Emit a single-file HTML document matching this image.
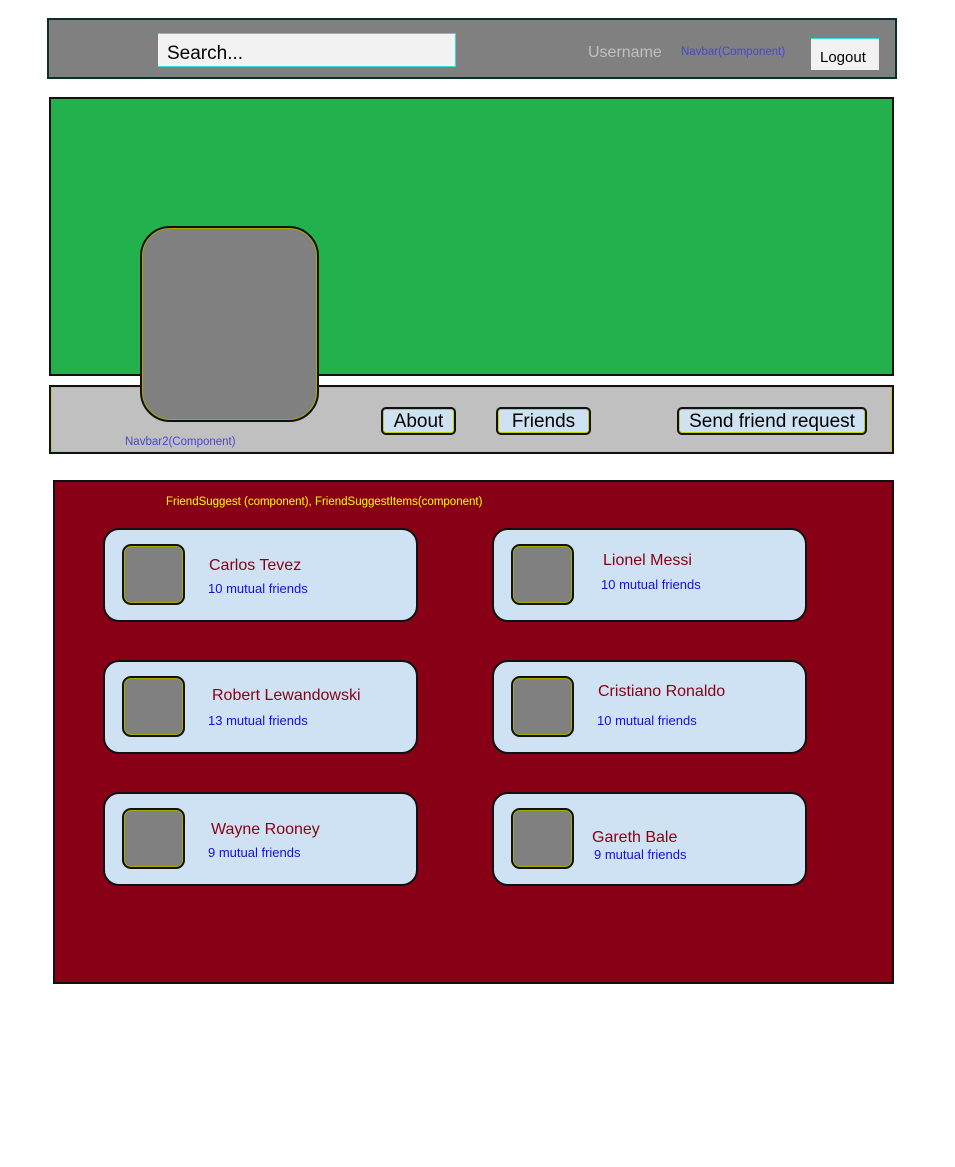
<!DOCTYPE html>
<html><head><style>
body{margin:0;width:955px;height:1167px;background:#fff;position:relative;font-family:"Liberation Sans",sans-serif;overflow:hidden}
div,span{position:absolute;box-sizing:border-box}
.btn{background:#cfe2f3;border:2px solid #111;box-shadow:0 0 0 1px #cc0 inset;border-radius:5px;font-size:19px;color:#000;line-height:26px;text-align:center}
.card{width:315px;height:94px;background:#cfe2f3;border:2px solid #111;border-radius:16px}
.th{width:63px;height:61px;background:#808080;border:2px solid #111;box-shadow:0 0 0 1px #aa0 inset;border-radius:9px}
.nm{color:#880015;font-size:16px}
.mf{color:#1010e0;font-size:13px}
</style></head><body>
<div style="left:47px;top:18px;width:850px;height:61px;background:#808080;border:2px solid #0c2f2c"></div>
<div style="left:158px;top:33px;width:298px;height:34px;background:#f2f2f2;border-right:1px solid #3dd;border-bottom:1px solid #3dd;border-top:1px solid #3dd;font-size:19px;padding:9px 0 0 9px;line-height:22px">Search...</div>
<span style="left:588px;top:44px;color:#c0c0c0;font-size:16px">Username</span>
<span style="left:681px;top:46px;color:#4848c8;font-size:11.5px">Navbar(Component)</span>
<div style="left:811px;top:38px;width:68px;height:32px;background:#f2f2f2;border-top:1px solid #3dd;font-size:15px;padding:10px 0 0 9px">Logout</div>

<div style="left:49px;top:97px;width:845px;height:279px;background:#22b14c;border:2px solid #111"></div>
<div style="left:49px;top:385px;width:845px;height:69px;background:#c0c0c0;border:2px solid #111;box-shadow:0 0 0 1px #cc0 inset"></div>
<div style="left:140px;top:226px;width:179px;height:196px;background:#808080;border:2px solid #111;box-shadow:0 0 0 1px #aa0 inset;border-radius:30px"></div>
<span style="left:125px;top:436px;color:#4848c8;font-size:11.5px">Navbar2(Component)</span>
<div class="btn" style="left:381px;top:407px;width:75px;height:28px">About</div>
<div class="btn" style="left:496px;top:407px;width:95px;height:28px">Friends</div>
<div class="btn" style="left:677px;top:407px;width:190px;height:28px">Send friend request</div>

<div style="left:53px;top:480px;width:841px;height:504px;background:#880015;border:2px solid #111"></div>
<span style="left:166px;top:496px;color:#ff0;font-size:11.5px">FriendSuggest (component), FriendSuggestItems(component)</span>

<div class="card" style="left:103px;top:528px"></div><div class="th" style="left:122px;top:544px"></div>
<span class="nm" style="left:209px;top:557px">Carlos Tevez</span><span class="mf" style="left:208px;top:581px">10 mutual friends</span>
<div class="card" style="left:492px;top:528px"></div><div class="th" style="left:511px;top:544px"></div>
<span class="nm" style="left:603px;top:552px">Lionel Messi</span><span class="mf" style="left:601px;top:577px">10 mutual friends</span>

<div class="card" style="left:103px;top:660px"></div><div class="th" style="left:122px;top:676px"></div>
<span class="nm" style="left:212px;top:687px">Robert Lewandowski</span><span class="mf" style="left:208px;top:713px">13 mutual friends</span>
<div class="card" style="left:492px;top:660px"></div><div class="th" style="left:511px;top:676px"></div>
<span class="nm" style="left:598px;top:683px">Cristiano Ronaldo</span><span class="mf" style="left:597px;top:713px">10 mutual friends</span>

<div class="card" style="left:103px;top:792px"></div><div class="th" style="left:122px;top:808px"></div>
<span class="nm" style="left:211px;top:821px">Wayne Rooney</span><span class="mf" style="left:208px;top:845px">9 mutual friends</span>
<div class="card" style="left:492px;top:792px"></div><div class="th" style="left:511px;top:808px"></div>
<span class="nm" style="left:592px;top:829px">Gareth Bale</span><span class="mf" style="left:594px;top:847px">9 mutual friends</span>
</body></html>
